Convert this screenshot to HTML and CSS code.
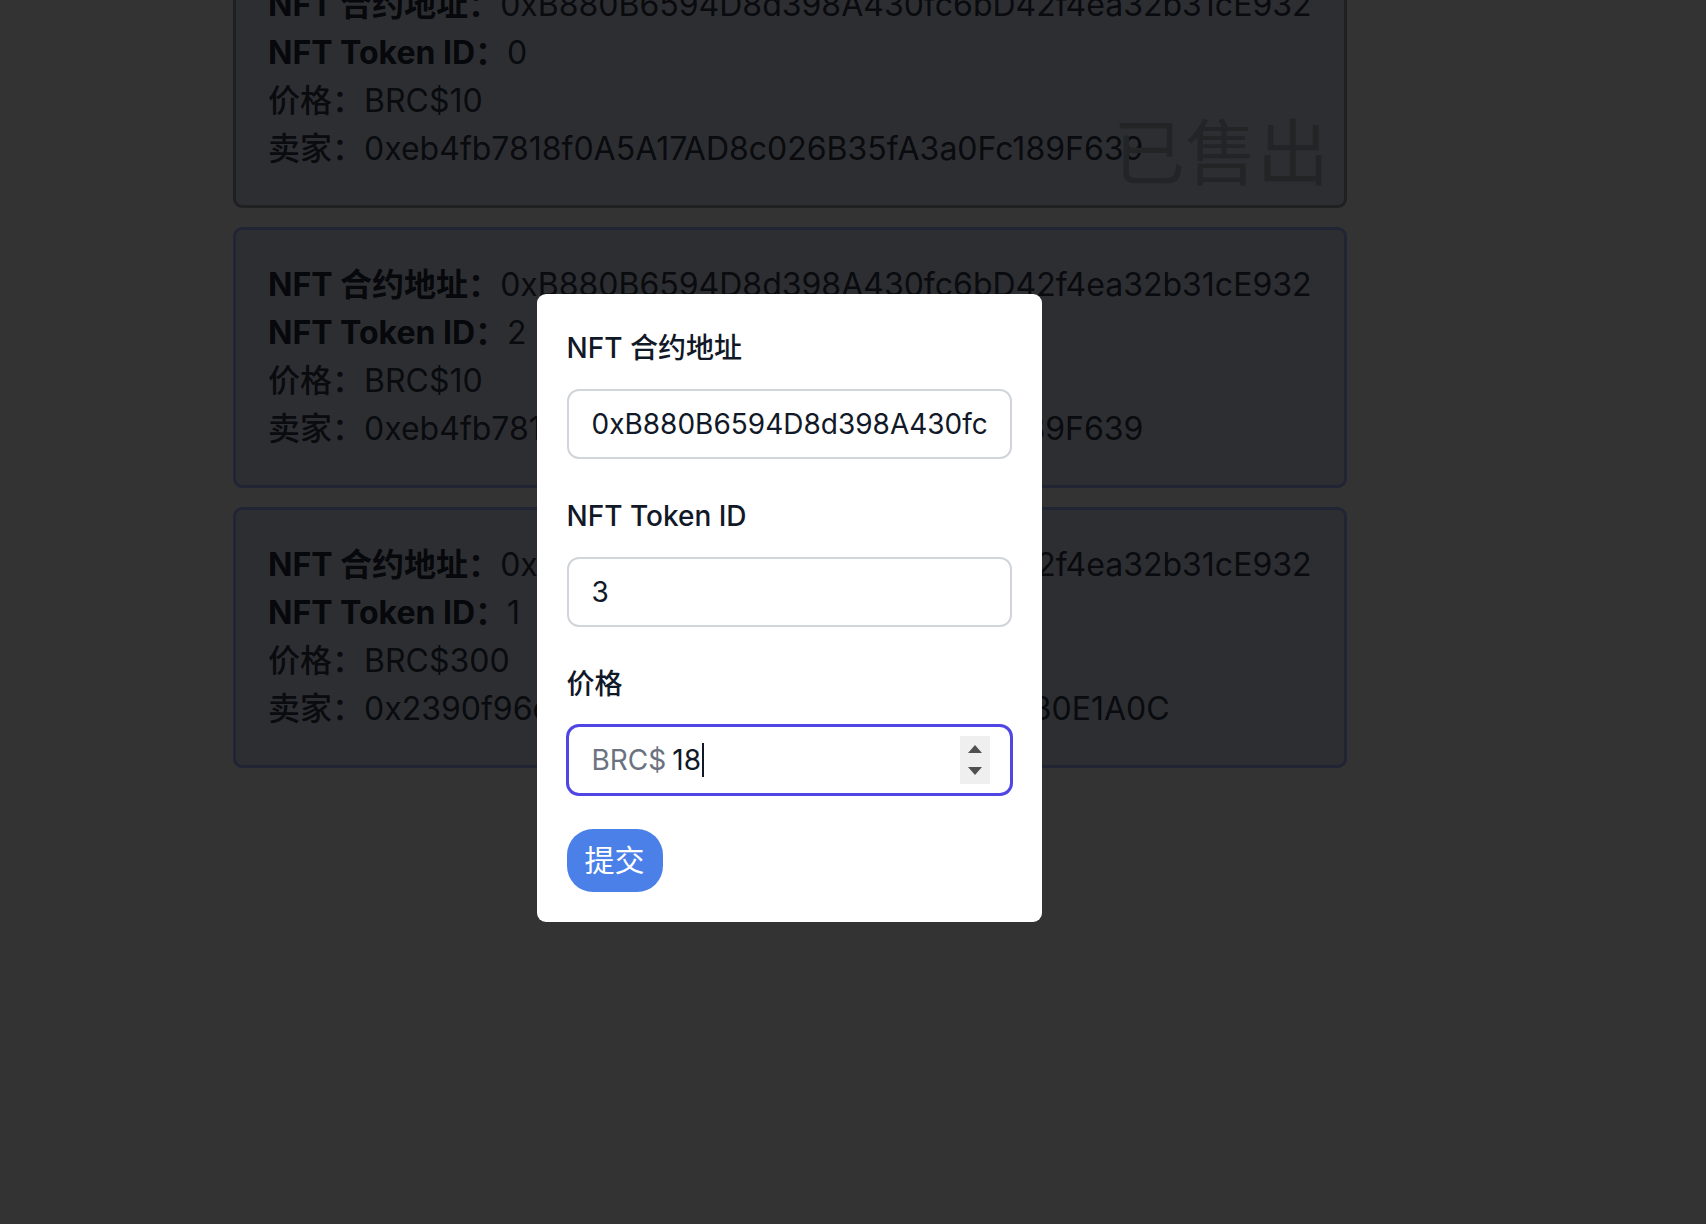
FILE: index.html
```html
<!DOCTYPE html>
<html lang="zh-CN">
<head>
<meta charset="utf-8">
<title>NFT 市场</title>
<link rel="stylesheet" href="styles.css">
</head>
<body>
<main class="list">
  <section class="card card-sold">
    <p class="row"><b class="key">NFT 合约地址：</b>0xB880B6594D8d398A430fc6bD42f4ea32b31cE932</p>
    <p class="row"><b class="key">NFT Token ID：</b>0</p>
    <p class="row"><span class="key-light">价格：</span>BRC$10</p>
    <p class="row"><span class="key-light">卖家：</span>0xeb4fb7818f0A5A17AD8c026B35fA3a0Fc189F639</p>
    <span class="sold">已售出</span>
  </section>
  <section class="card">
    <p class="row"><b class="key">NFT 合约地址：</b>0xB880B6594D8d398A430fc6bD42f4ea32b31cE932</p>
    <p class="row"><b class="key">NFT Token ID：</b>2</p>
    <p class="row"><span class="key-light">价格：</span>BRC$10</p>
    <p class="row"><span class="key-light">卖家：</span>0xeb4fb7818f0A5A17AD8c026B35fA3a0Fc189F639</p>
  </section>
  <section class="card">
    <p class="row"><b class="key">NFT 合约地址：</b>0xB880B6594D8d398A430fc6bD42f4ea32b31cE932</p>
    <p class="row"><b class="key">NFT Token ID：</b>1</p>
    <p class="row"><span class="key-light">价格：</span>BRC$300</p>
    <p class="row"><span class="key-light">卖家：</span>0x2390f96c4bE72A5d8F0b13Cd9e6A7B2f430E1A0C</p>
  </section>
</main>

<div class="overlay"></div>

<div class="modal-layer">
  <form class="modal">
    <div class="field">
      <label class="label">NFT 合约地址</label>
      <input class="input" type="text" value="0xB880B6594D8d398A430fc6bD42f4ea32b31cE932">
    </div>
    <div class="field">
      <label class="label">NFT Token ID</label>
      <input class="input" type="text" value="3">
    </div>
    <div class="field field-last">
      <label class="label">价格</label>
      <div class="input input-focus">
        <span class="prefix">BRC$</span>
        <span class="value">18</span><span class="caret"></span>
        <span class="spinner"><span class="tri-up"></span><span class="tri-down"></span></span>
      </div>
    </div>
    <button class="submit" type="button">提交</button>
  </form>
</div>
</body>
</html>
```

FILE: styles.css
```css
html, body {
  margin: 0;
  padding: 0;
}

body {
  background: #ffffff;
  font-family: Inter, "Noto Sans CJK SC", sans-serif;
  color: #374151;
  overflow: hidden;
  height: 1224px;
}

.list {
  width: 1114px;
  margin: -53px 0 0 233px;
  display: flex;
  flex-direction: column;
  gap: 19px;
}

.card {
  position: relative;
  box-sizing: border-box;
  height: 261px;
  padding: 31px 32px;
  border: 3px solid #a5b4fc;
  border-radius: 9px;
  background: #e0e5fb;
}

.card-sold {
  border-color: #9ca0a8;
}

.row {
  margin: 0;
  font-size: 32px;
  line-height: 48px;
  white-space: nowrap;
  color: #2f3846;
}

.key {
  font-weight: 700;
  color: #1f2937;
}

.key-light {
  font-weight: 500;
}

.sold {
  position: absolute;
  right: 15px;
  bottom: 7px;
  font-size: 72px;
  line-height: 90px;
  color: #aeb2be;
  font-weight: 400;
}

.overlay {
  position: fixed;
  inset: 0;
  background: rgba(0, 0, 0, 0.8);
}

.modal-layer {
  position: fixed;
  top: 0;
  left: 232px;
  width: 1114px;
  height: 1224px;
  display: flex;
  justify-content: center;
  align-items: flex-start;
  padding-top: 294px;
  box-sizing: border-box;
}

.modal {
  width: 505px;
  box-sizing: border-box;
  background: #ffffff;
  border-radius: 9px;
  padding: 30px;
  display: flex;
  flex-direction: column;
}

.field {
  display: flex;
  flex-direction: column;
  margin-bottom: 33px;
}

.field-last {
  margin-bottom: 34px;
}

.label {
  font-size: 28px;
  line-height: 48px;
  font-weight: 500;
  color: #111827;
  margin-bottom: 17px;
}

.input {
  box-sizing: border-box;
  width: 100%;
  height: 70px;
  padding: 0 22px 0 23px;
  border: 2px solid #d1d5db;
  border-radius: 12px;
  font-family: Inter, "Noto Sans CJK SC", sans-serif;
  font-size: 28px;
  color: #111827;
  background: #ffffff;
  outline: none;
  margin: 0;
}

.input-focus {
  display: flex;
  align-items: center;
  border-color: #4f46e5;
  box-shadow: 0 0 0 1px #4f46e5;
}

.prefix {
  color: #6b7280;
}

.value {
  margin-left: 6px;
  color: #111827;
}

.caret {
  width: 2px;
  height: 34px;
  background: #111827;
  margin-left: 1px;
}

.spinner {
  margin-left: auto;
  margin-right: -2px;
  width: 30px;
  height: 48px;
  background: #efefef;
  display: flex;
  flex-direction: column;
  align-items: center;
  justify-content: center;
  gap: 14px;
}

.tri-up,
.tri-down {
  width: 0;
  height: 0;
  border-left: 7px solid transparent;
  border-right: 7px solid transparent;
}

.tri-up {
  border-bottom: 8px solid #505050;
}

.tri-down {
  border-top: 8px solid #505050;
}

.submit {
  align-self: flex-start;
  width: 96px;
  height: 63px;
  padding: 0;
  border: none;
  border-radius: 26px;
  background: #4a80e8;
  color: #ffffff;
  font-family: Inter, "Noto Sans CJK SC", sans-serif;
  font-size: 30px;
  line-height: 63px;
}
```
